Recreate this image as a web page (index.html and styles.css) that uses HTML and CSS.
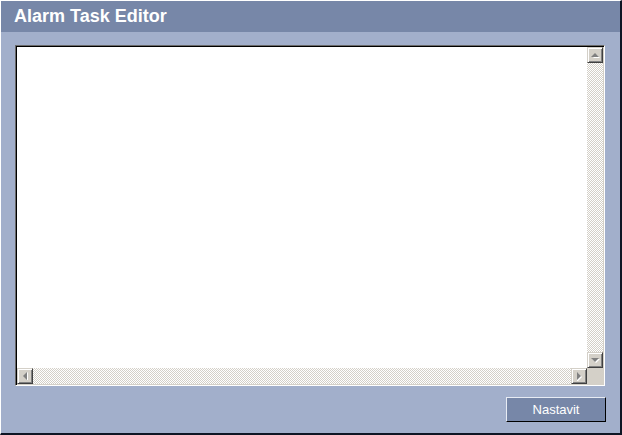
FILE: index.html
```html
<!DOCTYPE html>
<html>
<head>
<meta charset="utf-8">
<title>Alarm Task Editor</title>
<link rel="stylesheet" href="styles.css">
</head>
<body>
<div class="frame">
  <div class="header"><h1 class="title">Alarm Task Editor</h1></div>
  <div class="content">
    <div class="editor">
      <div class="text-area"></div>
      <div class="vscroll">
        <div class="sbtn"><svg width="14" height="14" viewBox="0 0 14 14"><polygon points="4,9 11,9 7.5,5.5" fill="#fff" transform="translate(1,1)"/><polygon points="3,9 11,9 7,5" fill="#808080"/></svg></div>
        <div class="track"></div>
        <div class="sbtn"><svg width="14" height="14" viewBox="0 0 14 14"><polygon points="4,6 12,6 8,10" fill="#fff"/><polygon points="3,5 11,5 7,9" fill="#808080"/></svg></div>
      </div>
      <div class="hscroll">
        <div class="sbtn"><svg width="14" height="14" viewBox="0 0 14 14"><polygon points="9,3 9,11 5,7" fill="#808080"/><polygon points="9,11 10,11 10,4 9,3" fill="#fff"/></svg></div>
        <div class="track"></div>
        <div class="sbtn"><svg width="14" height="14" viewBox="0 0 14 14"><polygon points="5,4 6,4 10,8 6,12 5,12" fill="#fff"/><polygon points="5,3 5,11 9,7" fill="#808080"/></svg></div>
      </div>
      <div class="corner"></div>
    </div>
    <div class="actions">
      <button class="btn" type="button">Nastavit</button>
    </div>
  </div>
</div>
</body>
</html>
```

FILE: styles.css
```css
html, body {
  margin: 0;
  padding: 0;
  background: #a2afcb;
}

.frame {
  width: 622px;
  height: 435px;
  box-sizing: border-box;
  border-top: 1px solid #ffffff;
  border-left: 1px solid #ffffff;
  border-right: 2px solid #0e1524;
  border-bottom: 2px solid #0e1524;
  background: #a2afcb;
  display: flex;
  flex-direction: column;
  font-family: "Liberation Sans", Arial, sans-serif;
}

.header {
  height: 31px;
  background: #7787a8;
  padding-left: 13px;
}

.title {
  margin: 0;
  font-size: 18px;
  font-weight: bold;
  line-height: 31px;
  color: #ffffff;
}

.content {
  padding: 13px 15px 0 14px;
  display: flex;
  flex-direction: column;
}

.editor {
  height: 341px;
  box-sizing: border-box;
  border: 1px solid;
  border-color: #6a6a6a #ffffff #ffffff #6a6a6a;
  box-shadow: inset 1px 1px 0 #000000, inset -1px -1px 0 #d4d0c8;
  padding: 1px;
  display: grid;
  grid-template-columns: 1fr 16px;
  grid-template-rows: 1fr 16px;
  background: #ffffff;
}

.text-area {
  background: #ffffff;
}

.vscroll {
  display: flex;
  flex-direction: column;
}

.hscroll {
  display: flex;
}

.track {
  flex: 1;
  background: repeating-conic-gradient(#d4d0c8 0 25%, #ffffff 0 50%) 0 0 / 2px 2px;
}

.corner {
  background: #d4d0c8;
}

.sbtn {
  width: 16px;
  height: 16px;
  flex: none;
  box-sizing: border-box;
  background: #d4d0c8;
  border: 1px solid;
  border-color: #d4d0c8 #404040 #404040 #d4d0c8;
  box-shadow: inset 1px 1px 0 #ffffff, inset -1px -1px 0 #808080;
  display: flex;
  align-items: center;
  justify-content: center;
}

.sbtn svg {
  display: block;
}

.actions {
  display: flex;
  justify-content: flex-end;
  padding-top: 11px;
  margin-right: -1px;
}

.btn {
  width: 100px;
  height: 25px;
  box-sizing: border-box;
  margin: 0;
  padding: 0;
  background: #7787a8;
  border: 1px solid;
  border-color: #e8ecf4 #000000 #000000 #e8ecf4;
  color: #ffffff;
  font-family: "Liberation Sans", Arial, sans-serif;
  font-size: 13px;
  line-height: 23px;
  text-align: center;
}
```
